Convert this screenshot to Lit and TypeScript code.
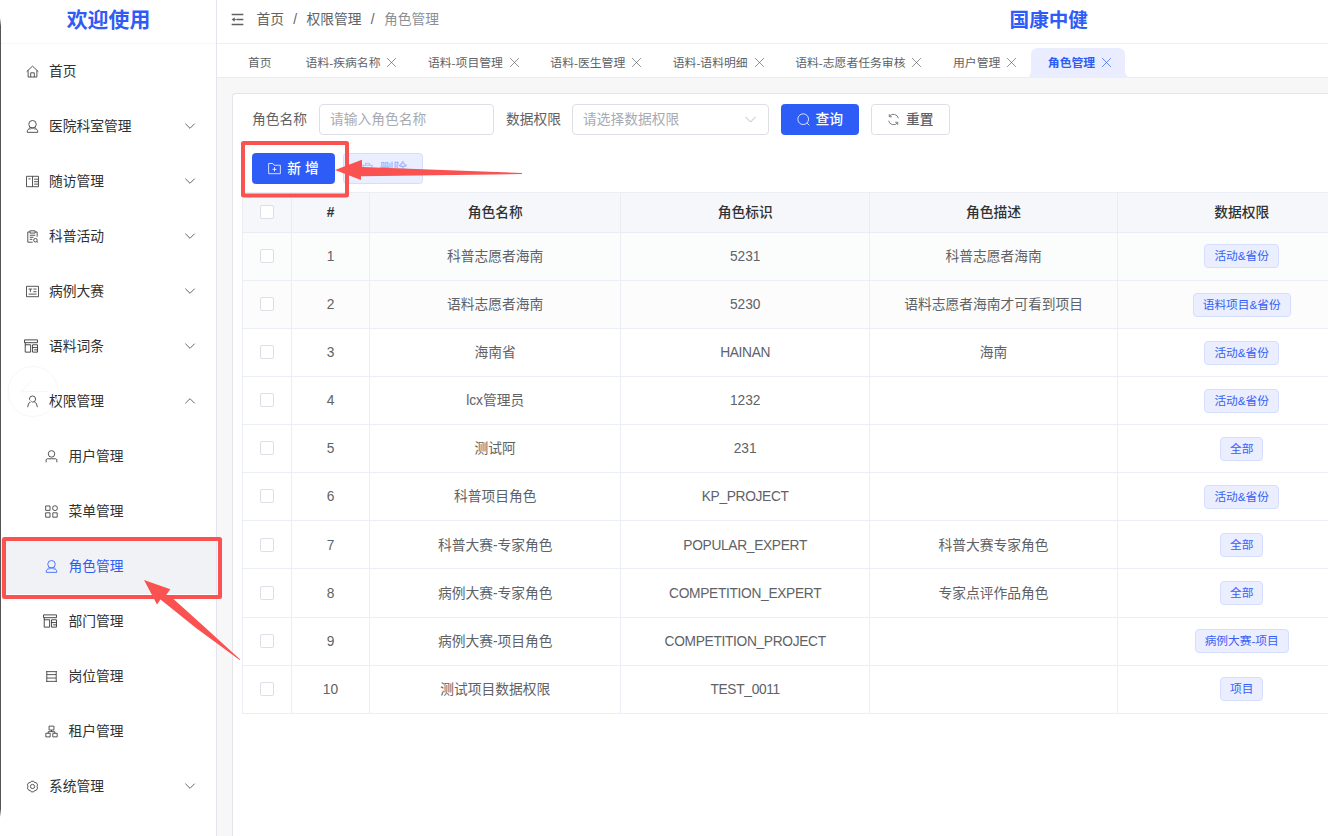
import { LitElement, html, css, svg, nothing } from "lit";
import { customElement } from "lit/decorators.js";
import { classMap } from "lit/directives/class-map.js";

// Line icons on a 16 x 16 grid.
const ICONS: Record<string, unknown> = {
  home: svg`<path d="M.8 8.200 8 1.400l7.200 6.800M2.600 6.600v8.200h10.800V6.600M5.800 14.800V9.600h4.400v5.200"/>`,
  avatar: svg`<circle cx="8" cy="5.200" r="4.600"/><path d="M5.300 8.800 1.600 13.200v2h12.800v-2L10.700 8.800M4.600 11.800c2-2.600 4.800-2.600 6.800 0"/>`,
  reading: svg`<path d="M.6 1.600h14.800v12.800H.6zM8 1.600v12.800M3 4.800h2.600M10 5.200h5M10 8.200h5M10 11.200h5"/>`,
  clip: svg`<path d="M4.500 2.400H2.200v12.600h6M11.500 2.400h2.200v6M4.800 1h6.400v2.800H4.800zM4.600 6.500h6.800M4.600 9h4.600M4.600 11.500h3.200"/><circle cx="11.600" cy="12.600" r="2.200"/><path d="m13.200 14.200 1.600 1"/>`,
  news: svg`<path d="M.6 1.600h14.800v12.800H.6zM3.200 5h4.400M5.400 5v3.600M9 5h4M9 8.200h4M3.200 11.200h9.800"/>`,
  layout: svg`<path d="M.6 1h14.800v3.200H.6zM1.400 4.200V15h6.200V6.600H1.400M9.800 6.600h5.600V15H9.800zM9.800 9.800h5.600M11.600 12.400h3.800"/>`,
  person: svg`<circle cx="8" cy="5" r="3.800"/><path d="M5.800 8.400 3.200 10.400 2 15M10.200 8.400l2.600 2 1.200 4.600"/>`,
  user: svg`<circle cx="8" cy="4.800" r="4"/><path d="M1.400 15.200v-3.400l1.400-1h10.400l1.400 1v3.400"/>`,
  menu: svg`<path d="M.8 1.200h5.400v5.400H.8zM.8 9.600h5.400V15H.8zM9.600 9.600H15V15H9.600z"/><circle cx="12.300" cy="3.900" r="3"/>`,
  post: svg`<path d="M1.200 2h13.600M1.200 14h13.600M2.200 2v12M13.800 2v12M2.200 5.700h11.600M2.200 9.900h11.600"/>`,
  tree: svg`<path d="M5 1.400h6v4.800H5zM1 10.200h5.400v4.400H1zM9.600 10.200H15v4.400H9.600zM8 6.200v2M3.900 10.200v-2h8.200v2"/>`,
  gear: svg`<path d="m6.500 1.600 3-.1 1 1.500 2.200.4 1.500 2.500-.6 2.100.6 2-1.500 2.600-2.200.5-1 1.500h-3L5.500 13l-2.200-.5L1.800 10l.6-2-.6-2.100 1.500-2.500 2.200-.4z"/><circle cx="8" cy="8" r="2.600"/>`,
  down: svg`<path d="m1.800 4.900 6.200 6.200 6.200-6.200"/>`,
  up: svg`<path d="M1.800 11.100 8 4.900l6.200 6.200"/>`,
  close: svg`<path d="m1.600 1.600 12.800 12.800M14.400 1.600 1.600 14.400"/>`,
  search: svg`<circle cx="7.600" cy="7.600" r="6.600"/><path d="m12.200 12.200 3 3"/>`,
  refresh: svg`<path d="M2 9.500A6.200 6.200 0 0 0 13 12M14 6.500A6.200 6.200 0 0 0 3 4M2.800 1.400V4.600H6M13.200 14.600v-3.200H10"/>`,
  folder: svg`<path d="M.8 1.800h5l1.800 2.200h7.600v10.400H.8zM8 6.400v5.200M5.400 9h5.200"/>`,
  trash: svg`<path d="M1.200 4h13.600M5.500 4V1.600h5V4M2.800 4v10.600h10.400V4M6.200 7v4.600M9.800 7v4.600"/>`,
  fold: svg`<g stroke-width="1.800"><path d="M.8 1.800h14.400M6.800 8h8.400M.8 14.200h14.400"/></g><path d="M.8 8l3.800-2.800v5.600z" fill="currentColor" stroke="none"/><path d="M3 8h4"/>`,
};

const icon = (name: string, cls = "") =>
  html`<svg class="ico ${cls}" viewBox="0 0 16 16" fill="none" stroke="currentColor">${ICONS[name]}</svg>`;

interface Item { icon: string; label: string; arrow?: string; sub?: boolean; on?: boolean; wide?: boolean }

const MENU: Item[] = [
  { icon: "home", label: "首页" },
  { icon: "avatar", label: "医院科室管理", arrow: "down" },
  { icon: "reading", label: "随访管理", arrow: "down" },
  { icon: "clip", label: "科普活动", arrow: "down" },
  { icon: "news", label: "病例大赛", arrow: "down" },
  { icon: "layout", label: "语料词条", arrow: "down", wide: true },
  { icon: "person", label: "权限管理", arrow: "up" },
  { icon: "user", label: "用户管理", sub: true },
  { icon: "menu", label: "菜单管理", sub: true },
  { icon: "avatar", label: "角色管理", sub: true, on: true },
  { icon: "layout", label: "部门管理", sub: true, wide: true },
  { icon: "post", label: "岗位管理", sub: true },
  { icon: "tree", label: "租户管理", sub: true },
  { icon: "gear", label: "系统管理", arrow: "down" },
];

const TABS = ["首页", "语料-疾病名称", "语料-项目管理", "语料-医生管理", "语料-语料明细", "语料-志愿者任务审核", "用户管理", "角色管理"];

const ROWS: string[][] = [
  ["科普志愿者海南", "5231", "科普志愿者海南", "活动&省份"],
  ["语料志愿者海南", "5230", "语料志愿者海南才可看到项目", "语料项目&省份"],
  ["海南省", "HAINAN", "海南", "活动&省份"],
  ["lcx管理员", "1232", "", "活动&省份"],
  ["测试阿", "231", "", "全部"],
  ["科普项目角色", "KP_PROJECT", "", "活动&省份"],
  ["科普大赛-专家角色", "POPULAR_EXPERT", "科普大赛专家角色", "全部"],
  ["病例大赛-专家角色", "COMPETITION_EXPERT", "专家点评作品角色", "全部"],
  ["病例大赛-项目角色", "COMPETITION_PROJECT", "", "病例大赛-项目"],
  ["测试项目数据权限", "TEST_0011", "", "项目"],
];

@customElement("app-root")
export class AppRoot extends LitElement {
  static styles = css`
    :host {
      display: flex;
      position: relative;
      width: 1328px;
      height: 836px;
      overflow: hidden;
      background: #fff;
      font: 13.75px/20px "Liberation Sans", "Noto Sans CJK SC", sans-serif;
      color: #606266;
    }
    * { box-sizing: border-box; }
    .ico { width: 13px; height: 13px; flex: none; display: block; }
    .side { width: 217px; flex: none; border-right: 1px solid #e4e5f0; background: #fff; }
    .brand {
      height: 44px; padding: 6px 0 0 1px; border-bottom: 1px solid #f8f8fa;
      text-align: center; font-size: 20.9px; line-height: 28px; font-weight: 700; color: #2f5cf6;
    }
    .item { display: flex; align-items: center; height: 55px; padding: 0 20px 0 25.5px; color: #303133; }
    .item .ico { margin-bottom: 1px; }
    .item .label { margin-left: 10.5px; flex: 1; }
    .item .chev { width: 12px; height: 12px; margin: 0 0 1px 0; }
    .item .wide { width: 14px; height: 14px; margin: 0 1px 2px -2px; }
    .sub { padding-left: 45px; }
    .on { background: #f1f2f5; color: #2f5cf6; }
    .main { flex: 1; min-width: 0; display: flex; flex-direction: column; background: #f7f7f7; }
    .top { height: 44px; display: flex; align-items: center; padding: 0 0 5px 13.5px; background: #fff; border-bottom: 1px solid #efeff1; }
    .crumb { display: flex; align-items: center; margin-left: 13px; padding-top: 1px; }
    .crumb .sep { width: 22.5px; text-align: center; }
    .crumb .last { color: #8c8f96; }
    .fold { color: #5f6166; width: 13px; height: 13px; }
    .org { margin-left: 570.5px; padding-top: 1px; font-size: 19.6px; line-height: 28px; font-weight: 700; color: #2f5cf6; }
    .tabs { height: 34px; display: flex; align-items: flex-end; background: #fff; border-bottom: 1px solid #ececee; padding-left: 14px; font-size: 11.83px; }
    .tab { position: relative; height: 29px; display: flex; align-items: center; padding: 0 15.2px 0 16.4px; margin-right: -1px; }
    .tab .ico { width: 11px; height: 11px; margin-left: 5.9px; }
    .tab.home { padding-left: 17px; padding-right: 18.5px; }
    .tab span, .tab .ico { z-index: 1; }
    .tab.cur { color: #2f5cf6; font-weight: 700; }
    .bump { position: absolute; left: -3px; top: -1px; width: 101px; height: 31px; }
    .card { flex: 1; margin: 15px 0 0 15px; background: #fff; border: solid #e4e5ea; border-width: 1px 0 0 1px; border-top-left-radius: 4px; padding: 10px 0 0 9px; }
    .filters { display: flex; align-items: center; height: 31px; padding-left: 10px; }
    .field { height: 31px; border: 1px solid #dcdfe6; border-radius: 4px; display: flex; align-items: center; justify-content: space-between; padding: 0 11px 0 10px; color: #a8abb2; background: #fff; }
    .name { width: 175px; margin: 0 12px; }
    .scope { width: 197px; margin: 0 11.5px 0 11px; }
    .btn { height: 31px; border-radius: 3.5px; border: 1px solid #dcdfe6; display: flex; align-items: center; justify-content: center; gap: 6px; font-weight: 500; background: #fff; }
    .query { width: 78.5px; }
    .reset { width: 78.5px; margin-left: 12px; }
    .primary { background: #2e5cf6; border-color: #2e5cf6; color: #fff; }
    .tools { display: flex; padding: 18px 0 0 10px; height: 57px; }
    .add { width: 83px; gap: 6px; }
    .add .t { margin-right: -4px; letter-spacing: 4px; }
    .del { width: 80px; margin-left: 8px; background: #eaeeff; border-color: #d5deff; color: #a3b4fb; padding-left: 2px; }
    .grid { display: grid; width: 1125px; grid-template-columns: 49px 78px 251.4px 248.6px 248.2px 248px; }
    .table { border-top: 1px solid #ebeef5; border-left: 1px solid #ebeef5; }
    .cell { height: 48.1px; display: flex; align-items: center; justify-content: center; border: solid #ebeef5; border-width: 0 1px 1px 0; padding-top: 1.2px; }
    .head .cell { height: 39.8px; background: #f5f7fb; color: #303133; font-weight: 500; border-color: #e9ecf3; }
    .head .num { font-weight: 700; }
    .caps { letter-spacing: -.32px; }
    .r0 .cell { background: #fbfdfc; }
    .r1 .cell { background: #fcfcfc; }
    .box { width: 14px; height: 14px; border: 1px solid #dcdfe6; border-radius: 2px; background: #fff; margin: 0 1px 2px 0; }
    .tag { height: 24px; line-height: 22px; padding: 0 9px; margin-bottom: 1px; border: 1px solid #d5deff; border-radius: 4px; background: #eaeeff; color: #3661f6; font-size: 11.7px; }
    .notes { position: absolute; inset: 0; width: 1328px; height: 836px; pointer-events: none; }
  `;

  render() {
    return html`
      <nav class="side">
        <div class="brand">欢迎使用</div>
        ${MENU.map((m) => html`
          <div class=${classMap({ item: true, sub: !!m.sub, on: !!m.on })}>
            ${icon(m.icon, m.wide ? "wide" : "")}
            <span class="label">${m.label}</span>
            ${m.arrow ? icon(m.arrow, "chev") : nothing}
          </div>`)}
      </nav>
      <section class="main">
        <header class="top">
          ${icon("fold", "fold")}
          <div class="crumb">
            <span>首页</span><span class="sep">/</span><span>权限管理</span><span class="sep">/</span><span class="last">角色管理</span>
          </div>
          <div class="org">国康中健</div>
        </header>
        <div class="tabs">
          ${TABS.map((t, i) => {
            const cur = i === TABS.length - 1;
            return html`<div class=${classMap({ tab: true, home: i === 0, cur })}>
              ${cur ? html`<svg class="bump" viewBox="0 0 101 31"><path d="M0 31C3 27 3 25 3 22V8q0-7 7-7h80q7 0 7 7v14c0 3 0 5 4 9z" fill="#e9edff"/></svg>` : nothing}
              <span>${t}</span>${i ? icon("close") : nothing}
            </div>`;
          })}
        </div>
        <div class="card">
          <div class="filters">
            <span>角色名称</span>
            <div class="field name">请输入角色名称</div>
            <span>数据权限</span>
            <div class="field scope"><span>请选择数据权限</span>${icon("down")}</div>
            <div class="btn primary query">${icon("search")}<span>查询</span></div>
            <div class="btn reset">${icon("refresh")}<span>重置</span></div>
          </div>
          <div class="tools">
            <div class="btn primary add">${icon("folder")}<span class="t">新增</span></div>
            <div class="btn del">${icon("trash")}<span>删除</span></div>
          </div>
          <div class="table">
            <div class="grid head">
              <div class="cell"><i class="box"></i></div>
              <div class="cell num">#</div>
              ${["角色名称", "角色标识", "角色描述", "数据权限"].map((h) => html`<div class="cell">${h}</div>`)}
            </div>
            ${ROWS.map((r, i) => html`
              <div class="grid r${i}">
                <div class="cell"><i class="box"></i></div>
                <div class="cell">${i + 1}</div>
                <div class="cell">${r[0]}</div>
                <div class=${classMap({ cell: true, caps: /[A-Z]/.test(r[1]) })}>${r[1]}</div>
                <div class="cell">${r[2]}</div>
                <div class="cell"><span class="tag">${r[3]}</span></div>
              </div>`)}
          </div>
        </div>
      </section>
      <svg class="notes" viewBox="0 0 1328 836">
        <defs>
          <linearGradient id="edge" x1="0" y1="0" x2="0" y2="1">
            <stop offset="0" stop-color="#555" stop-opacity="0"/><stop offset=".01" stop-color="#555"/>
            <stop offset=".99" stop-color="#555"/><stop offset="1" stop-color="#555" stop-opacity="0"/>
          </linearGradient>
        </defs>
        <rect x="0" y="18" width="1" height="799" fill="url(#edge)"/>
        <g fill="none" stroke="#f7f7f7"><circle cx="33" cy="391.5" r="25"/><path d="M48 391.5H21M32 380l-11 11.5L32 403"/></g>
        <g fill="none" stroke="#fa5151" stroke-width="4">
          <rect x="243" y="143" width="104" height="52.5" rx=".5"/>
          <rect x="4" y="539" width="216" height="58" rx=".5"/>
        </g>
        <g fill="#fa5151">
          <path d="M335 170 362 159.8V167l160 6v1l-161 2.2V180z"/>
          <path d="M144 580l26.300 9.300-4.300 5.900L173.500 599 204 626.500 240.200 659.500l-.6.600L196 628 160.500 599.500l-3.500 5z"/>
        </g>
      </svg>
    `;
  }
}
